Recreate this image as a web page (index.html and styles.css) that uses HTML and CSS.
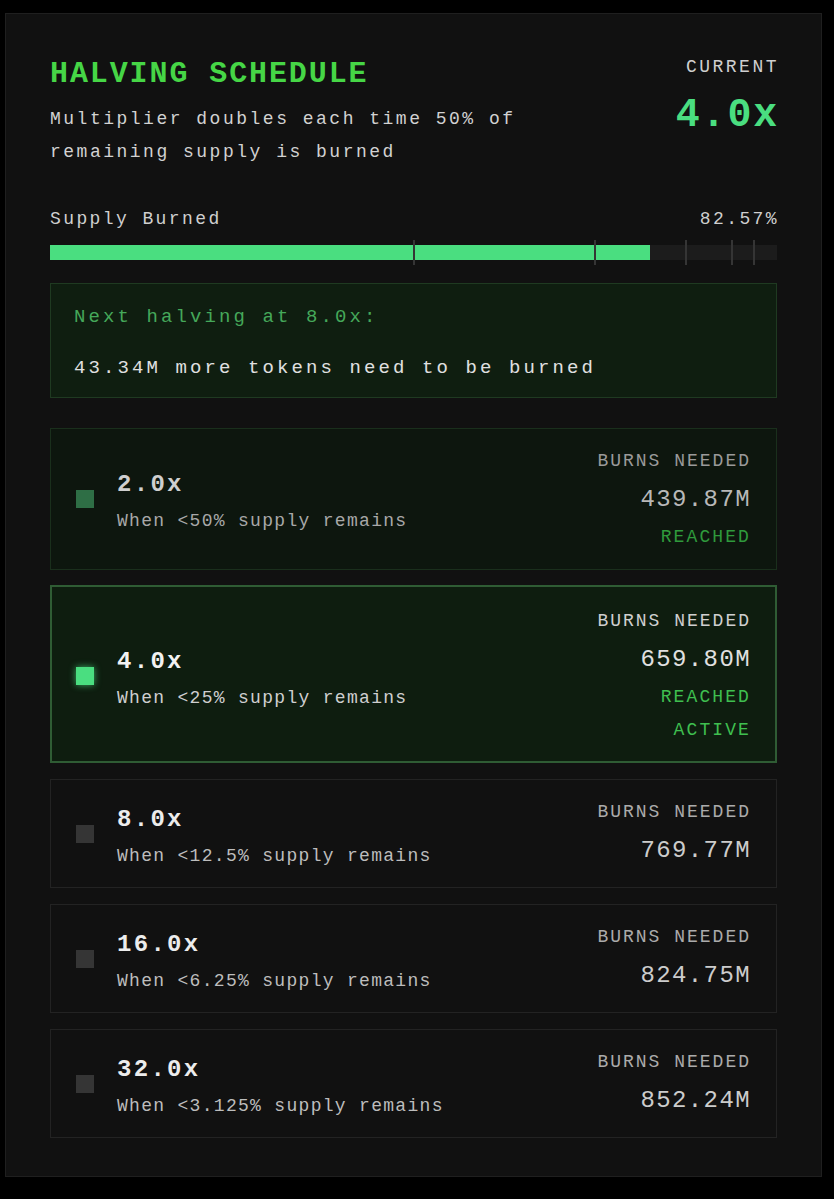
FILE: index.html
```html
<!DOCTYPE html>
<html lang="en">
<head>
<meta charset="utf-8">
<title>Halving Schedule</title>
<link rel="stylesheet" href="styles.css">
</head>
<body>
<div class="panel">
  <header class="head">
    <div class="head-left">
      <h1 class="title">HALVING SCHEDULE</h1>
      <p class="desc">Multiplier doubles each time 50% of remaining supply is burned</p>
    </div>
    <div class="head-right">
      <div class="cur-label">CURRENT</div>
      <div class="cur-value">4.0x</div>
    </div>
  </header>

  <section class="supply">
    <div class="supply-row">
      <span class="supply-label">Supply Burned</span>
      <span class="supply-pct">82.57%</span>
    </div>
    <div class="bar">
      <div class="fill" style="width:82.57%"></div>
      <span class="tick" style="left:50%"></span>
      <span class="tick" style="left:75%"></span>
      <span class="tick" style="left:87.5%"></span>
      <span class="tick" style="left:93.75%"></span>
      <span class="tick" style="left:96.875%"></span>
    </div>
  </section>

  <div class="next">
    <div class="next-title">Next halving at 8.0x:</div>
    <div class="next-text">43.34M more tokens need to be burned</div>
  </div>

  <div class="tiers">
    <div class="tier tier-reached">
      <div class="tier-left">
        <span class="dot"></span>
        <div>
          <div class="tier-name">2.0x</div>
          <div class="tier-desc">When &lt;50% supply remains</div>
        </div>
      </div>
      <div class="tier-right">
        <div class="lbl">BURNS NEEDED</div>
        <div class="val">439.87M</div>
        <div class="status">REACHED</div>
      </div>
    </div>

    <div class="tier tier-active">
      <div class="tier-left">
        <span class="dot"></span>
        <div>
          <div class="tier-name">4.0x</div>
          <div class="tier-desc">When &lt;25% supply remains</div>
        </div>
      </div>
      <div class="tier-right">
        <div class="lbl">BURNS NEEDED</div>
        <div class="val">659.80M</div>
        <div class="status">REACHED</div>
        <div class="status">ACTIVE</div>
      </div>
    </div>

    <div class="tier">
      <div class="tier-left">
        <span class="dot"></span>
        <div>
          <div class="tier-name">8.0x</div>
          <div class="tier-desc">When &lt;12.5% supply remains</div>
        </div>
      </div>
      <div class="tier-right">
        <div class="lbl">BURNS NEEDED</div>
        <div class="val">769.77M</div>
      </div>
    </div>

    <div class="tier">
      <div class="tier-left">
        <span class="dot"></span>
        <div>
          <div class="tier-name">16.0x</div>
          <div class="tier-desc">When &lt;6.25% supply remains</div>
        </div>
      </div>
      <div class="tier-right">
        <div class="lbl">BURNS NEEDED</div>
        <div class="val">824.75M</div>
      </div>
    </div>

    <div class="tier">
      <div class="tier-left">
        <span class="dot"></span>
        <div>
          <div class="tier-name">32.0x</div>
          <div class="tier-desc">When &lt;3.125% supply remains</div>
        </div>
      </div>
      <div class="tier-right">
        <div class="lbl">BURNS NEEDED</div>
        <div class="val">852.24M</div>
      </div>
    </div>
  </div>
</div>
</body>
</html>
```

FILE: styles.css
```css
* { box-sizing: border-box; }

html, body {
  margin: 0;
  background: #000;
}

body {
  padding: 13px 12px 22px 5px;
  font-family: "Liberation Mono", "Courier New", monospace;
  color: #d4d4d4;
}

.panel {
  background: #111111;
  border: 1px solid #1f1f1f;
  padding: 41px 44px 38px 44px;
}

/* header */
.head {
  display: flex;
  justify-content: space-between;
  align-items: flex-start;
}

.title {
  margin: 0;
  font-size: 30px;
  line-height: 38px;
  font-weight: bold;
  letter-spacing: 1.9px;
  color: #46d646;
}

.desc {
  margin: 10px 0 0;
  max-width: 520px;
  font-size: 18px;
  line-height: 33px;
  letter-spacing: 2.5px;
  color: #d2d2d2;
}

.head-right {
  text-align: right;
  margin-right: -2px;
}

.cur-label {
  font-size: 18px;
  line-height: 24px;
  letter-spacing: 2.5px;
  color: #cfcfcf;
}

.cur-value {
  margin-top: 13px;
  font-size: 40px;
  line-height: 48px;
  font-weight: bold;
  letter-spacing: 1.8px;
  color: #4ade80;
}

/* supply bar */
.supply {
  margin-top: 38px;
}

.supply-row {
  display: flex;
  justify-content: space-between;
  font-size: 18px;
  line-height: 24px;
  letter-spacing: 2.4px;
  color: #cfcfcf;
}

.supply-pct {
  margin-right: -2px;
}

.bar {
  position: relative;
  margin-top: 14px;
  height: 15px;
  background: #1c1c1c;
}

.fill {
  height: 100%;
  background: #4ade80;
}

.tick {
  position: absolute;
  top: -5px;
  bottom: -5px;
  width: 2px;
  margin-left: -1px;
  background: #353535;
}

/* next halving box */
.next {
  margin-top: 23px;
  background: #0f1e10;
  border: 1px solid #1f3a21;
  padding: 21px 24px 17px 23px;
  font-size: 19px;
  line-height: 24px;
  letter-spacing: 3.1px;
}

.next-title {
  color: #45a85a;
}

.next-text {
  margin-top: 27px;
  color: #e0e0e0;
}

/* tiers */
.tiers {
  margin-top: 30px;
  display: flex;
  flex-direction: column;
  gap: 16px;
}

.tier {
  display: flex;
  justify-content: space-between;
  align-items: center;
  background: #111111;
  border: 1px solid #232323;
  padding: 18px 25px 18px 25px;
}

.tier-left {
  display: flex;
  align-items: center;
  gap: 23px;
}

.dot {
  flex: none;
  width: 18px;
  height: 18px;
  background: #353535;
}

.tier-name {
  font-size: 24px;
  line-height: 40px;
  font-weight: bold;
  letter-spacing: 2.3px;
  color: #ececec;
}

.tier-desc {
  margin-top: 4px;
  font-size: 18px;
  line-height: 24px;
  letter-spacing: 1.3px;
  color: #bdbdbd;
}

.tier-right {
  text-align: right;
}

.lbl {
  font-size: 18px;
  line-height: 28px;
  letter-spacing: 2px;
  color: #ababab;
}

.val {
  margin-top: 7px;
  font-size: 24px;
  line-height: 36px;
  letter-spacing: 1.4px;
  color: #cccccc;
}

.status {
  margin-top: 5px;
  font-size: 18px;
  line-height: 28px;
  letter-spacing: 2.1px;
  color: #3fae48;
}

/* reached tier */
.tier-reached {
  background: #0d160e;
  border-color: #1a2f1c;
}

.tier-reached .dot {
  background: #2e6e45;
}

.tier-reached .tier-name {
  color: #cfcfcf;
}

.tier-reached .tier-desc {
  color: #a8a8a8;
}

.tier-reached .lbl {
  color: #9a9a9a;
}

.tier-reached .val {
  color: #b8b8b8;
}

.tier-reached .status {
  color: #2f9a3c;
}

/* active tier */
.tier-active {
  margin-top: -1px;
  background: #0e1d0f;
  border: 2px solid #2f5c34;
  padding: 20px 24px 17px 24px;
}

.tier-active .dot {
  background: #4ade80;
  box-shadow: 0 0 7px rgba(74, 222, 128, 0.75);
}

.tier-active .tier-name {
  color: #f2f2f2;
}

.tier-active .tier-desc {
  color: #cfcfcf;
}

.tier-active .lbl {
  color: #cfcfcf;
}

.tier-active .val {
  color: #e0e0e0;
}

.tier-active .status {
  color: #3fbf4f;
}
```
